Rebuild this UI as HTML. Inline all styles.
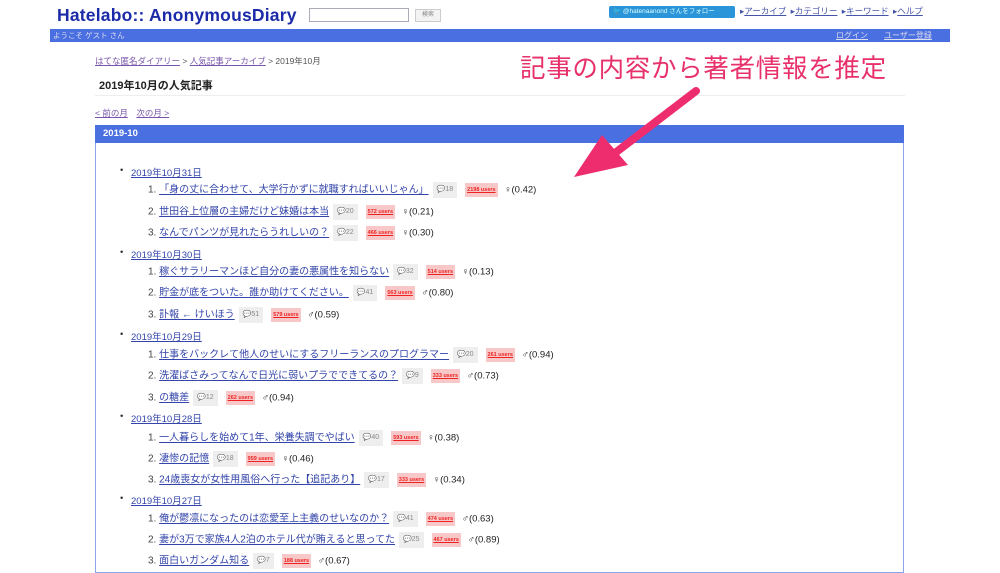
<!DOCTYPE html>
<html><head><meta charset="utf-8"><style>
body{margin:0;width:1000px;height:563px;background:#fff;position:relative;overflow:hidden;font-family:"Liberation Sans","Noto Sans CJK JP",sans-serif;}
.a{position:absolute;white-space:nowrap}
a{color:#3344aa;text-decoration:underline}
.r{position:absolute;white-space:nowrap;font-size:10px;color:#444;line-height:12px}
.r a{color:#3344aa}
.c{display:inline-block;background:#eee;color:#888;font-size:7px;padding:2px 4px;margin:0 4px;vertical-align:middle}
.u{display:inline-block;background:#f8c8c8;color:#e22;font-size:5.5px;font-weight:bold;padding:1px 2px;margin:0 4px;vertical-align:middle;text-decoration:underline}
.g{font-size:9.5px;color:#222}
.d{position:absolute;font-size:9.5px;white-space:nowrap}
.d:before{content:"•";position:absolute;left:-11px;color:#333}
</style></head><body>
<div class="a" style="left:57px;top:5px;font-size:17.5px;color:#1a2aa8;font-weight:bold;letter-spacing:0.2px">Hatelabo:: AnonymousDiary</div>
<div class="a" style="left:309px;top:8px;width:98px;height:12px;border:1px solid #aab"></div>
<div class="a" style="left:415px;top:9px;width:24px;height:11px;border:1px solid #ccc;background:#f3f3f3;font-size:6px;color:#888;text-align:center;line-height:11px">検索</div>
<div class="a" style="left:609px;top:6px;width:122px;height:12px;background:#2a95d8;border-radius:2px;color:#dff;font-size:6.5px;line-height:12px;padding-left:4px">🐦 @hatenaanond さんをフォロー</div>
<div class="a" style="left:740px;top:5px;font-size:8.5px;color:#4455aa;word-spacing:2px">▸<u>アーカイブ</u> ▸<u>カテゴリー</u> ▸<u>キーワード</u> ▸<u>ヘルプ</u></div>
<div class="a" style="left:50px;top:29px;width:900px;height:13px;background:#4a6fe0"></div>
<div class="a" style="left:53px;top:30px;font-size:7.5px;color:#dde;line-height:11px">ようこそ ゲスト さん</div>
<div class="a" style="left:836px;top:30px;font-size:8px;color:#dde;line-height:11px"><u>ログイン</u>　　<u>ユーザー登録</u></div>
<div class="a" style="left:95px;top:55px;font-size:8.5px;color:#555"><a style="color:#7755aa">はてな匿名ダイアリー</a> &gt; <a style="color:#7755aa">人気記事アーカイブ</a> &gt; 2019年10月</div>
<div class="a" style="left:99px;top:77px;font-size:11px;font-weight:bold;color:#222">2019年10月の人気記事</div>
<div class="a" style="left:95px;top:95px;width:810px;height:1px;background:#eee"></div>
<div class="a" style="left:95px;top:107px;font-size:8.5px"><a style="color:#7755aa">&lt; 前の月</a>　<a style="color:#7755aa">次の月 &gt;</a></div>
<div class="a" style="left:95px;top:125px;width:809px;height:18px;background:#4a6fe0;color:#fff;font-size:9.5px;font-weight:bold;line-height:18px;padding-left:8px;box-sizing:border-box">2019-10</div>
<div class="a" style="left:95px;top:143px;width:809px;height:430px;border:1px solid #8aa3ee;border-top:none;box-sizing:border-box"></div>
<div class="a" style="left:520px;top:48px;font-size:25.5px;color:#e8306a;letter-spacing:0.7px">記事の内容から著者情報を推定</div>
<svg class="a" style="left:560px;top:85px" width="150" height="110"><path d="M136 6 L55 68" stroke="#ee2d6e" stroke-width="8" stroke-linecap="round"/><path d="M14 92 L42 50 L68 80 Z" fill="#ee2d6e"/></svg>

<div class="d" style="left:131px;top:165px"><a>2019年10月31日</a></div>
<div class="r" style="left:148px;top:182px">1. <a>「身の丈に合わせて、大学行かずに就職すればいいじゃん」</a><span class="c">💬18</span><span class="u">2198 users</span> <span class="g">♀(0.42)</span></div>
<div class="r" style="left:148px;top:204px">2. <a>世田谷上位層の主婦だけど妹婚は本当</a><span class="c">💬20</span><span class="u">572 users</span> <span class="g">♀(0.21)</span></div>
<div class="r" style="left:148px;top:225px">3. <a>なんでパンツが見れたらうれしいの？</a><span class="c">💬22</span><span class="u">466 users</span> <span class="g">♀(0.30)</span></div>
<div class="d" style="left:131px;top:247px"><a>2019年10月30日</a></div>
<div class="r" style="left:148px;top:264px">1. <a>稼ぐサラリーマンほど自分の妻の悪属性を知らない</a><span class="c">💬32</span><span class="u">514 users</span> <span class="g">♀(0.13)</span></div>
<div class="r" style="left:148px;top:285px">2. <a>貯金が底をついた。誰か助けてください。</a><span class="c">💬41</span><span class="u">563 users</span> <span class="g">♂(0.80)</span></div>
<div class="r" style="left:148px;top:307px">3. <a>訃報 ← けいほう</a><span class="c">💬51</span><span class="u">579 users</span> <span class="g">♂(0.59)</span></div>
<div class="d" style="left:131px;top:329px"><a>2019年10月29日</a></div>
<div class="r" style="left:148px;top:347px">1. <a>仕事をバックレて他人のせいにするフリーランスのプログラマー</a><span class="c">💬20</span><span class="u">261 users</span> <span class="g">♂(0.94)</span></div>
<div class="r" style="left:148px;top:368px">2. <a>洗濯ばさみってなんで日光に弱いプラでできてるの？</a><span class="c">💬9</span><span class="u">333 users</span> <span class="g">♂(0.73)</span></div>
<div class="r" style="left:148px;top:390px">3. <a>の糖差</a><span class="c">💬12</span><span class="u">262 users</span> <span class="g">♂(0.94)</span></div>
<div class="d" style="left:131px;top:411px"><a>2019年10月28日</a></div>
<div class="r" style="left:148px;top:430px">1. <a>一人暮らしを始めて1年、栄養失調でやばい</a><span class="c">💬40</span><span class="u">593 users</span> <span class="g">♀(0.38)</span></div>
<div class="r" style="left:148px;top:451px">2. <a>凄惨の記憶</a><span class="c">💬18</span><span class="u">959 users</span> <span class="g">♀(0.46)</span></div>
<div class="r" style="left:148px;top:472px">3. <a>24歳喪女が女性用風俗へ行った【追記あり】</a><span class="c">💬17</span><span class="u">333 users</span> <span class="g">♀(0.34)</span></div>
<div class="d" style="left:131px;top:493px"><a>2019年10月27日</a></div>
<div class="r" style="left:148px;top:511px">1. <a>俺が鬱凛になったのは恋愛至上主義のせいなのか？</a><span class="c">💬41</span><span class="u">474 users</span> <span class="g">♂(0.63)</span></div>
<div class="r" style="left:148px;top:532px">2. <a>妻が3万で家族4人2泊のホテル代が賄えると思ってた</a><span class="c">💬25</span><span class="u">467 users</span> <span class="g">♂(0.89)</span></div>
<div class="r" style="left:148px;top:553px">3. <a>面白いガンダム知る</a><span class="c">💬7</span><span class="u">188 users</span> <span class="g">♂(0.67)</span></div>
</body></html>
